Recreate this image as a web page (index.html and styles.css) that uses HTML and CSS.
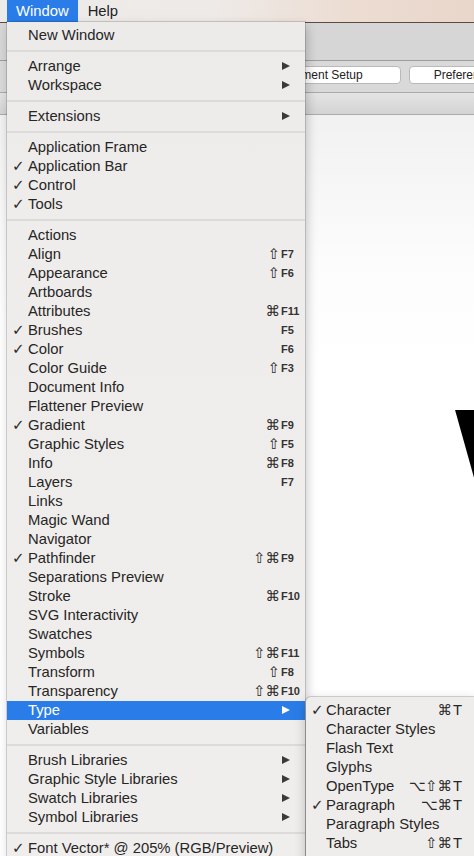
FILE: index.html
```html
<!DOCTYPE html>
<html>
<head>
<meta charset="utf-8">
<title>Window menu</title>
<link rel="stylesheet" href="styles.css">
</head>
<body>
<div class="screen">
  <div class="menubar">
    <span class="mb active">Window</span><span class="mb">Help</span>
  </div>
  <div class="window">
    <div class="toolbar"></div>
    <div class="controlbar">
      <button class="btn doc">Document Setup</button>
      <button class="btn pref">Preferences</button>
    </div>
    <div class="tabbar"></div>
    <div class="canvas"><span class="bigletter">V</span></div>
  </div>

  <div class="menu main">
    <div class="item"><span class="chk"></span><span class="lbl">New Window</span><span class="mod"></span><span class="key"></span></div>
    <div class="sep"></div>
    <div class="item"><span class="chk"></span><span class="lbl">Arrange</span><span class="mod"></span><span class="key"><i class="arrow"></i></span></div>
    <div class="item"><span class="chk"></span><span class="lbl">Workspace</span><span class="mod"></span><span class="key"><i class="arrow"></i></span></div>
    <div class="sep"></div>
    <div class="item"><span class="chk"></span><span class="lbl">Extensions</span><span class="mod"></span><span class="key"><i class="arrow"></i></span></div>
    <div class="sep"></div>
    <div class="item"><span class="chk"></span><span class="lbl">Application Frame</span><span class="mod"></span><span class="key"></span></div>
    <div class="item"><span class="chk">✓</span><span class="lbl">Application Bar</span><span class="mod"></span><span class="key"></span></div>
    <div class="item"><span class="chk">✓</span><span class="lbl">Control</span><span class="mod"></span><span class="key"></span></div>
    <div class="item"><span class="chk">✓</span><span class="lbl">Tools</span><span class="mod"></span><span class="key"></span></div>
    <div class="sep"></div>
    <div class="item"><span class="chk"></span><span class="lbl">Actions</span><span class="mod"></span><span class="key"></span></div>
    <div class="item"><span class="chk"></span><span class="lbl">Align</span><span class="mod">⇧</span><span class="key fk">F7</span></div>
    <div class="item"><span class="chk"></span><span class="lbl">Appearance</span><span class="mod">⇧</span><span class="key fk">F6</span></div>
    <div class="item"><span class="chk"></span><span class="lbl">Artboards</span><span class="mod"></span><span class="key"></span></div>
    <div class="item"><span class="chk"></span><span class="lbl">Attributes</span><span class="mod">⌘</span><span class="key fk">F11</span></div>
    <div class="item"><span class="chk">✓</span><span class="lbl">Brushes</span><span class="mod"></span><span class="key fk">F5</span></div>
    <div class="item"><span class="chk">✓</span><span class="lbl">Color</span><span class="mod"></span><span class="key fk">F6</span></div>
    <div class="item"><span class="chk"></span><span class="lbl">Color Guide</span><span class="mod">⇧</span><span class="key fk">F3</span></div>
    <div class="item"><span class="chk"></span><span class="lbl">Document Info</span><span class="mod"></span><span class="key"></span></div>
    <div class="item"><span class="chk"></span><span class="lbl">Flattener Preview</span><span class="mod"></span><span class="key"></span></div>
    <div class="item"><span class="chk">✓</span><span class="lbl">Gradient</span><span class="mod">⌘</span><span class="key fk">F9</span></div>
    <div class="item"><span class="chk"></span><span class="lbl">Graphic Styles</span><span class="mod">⇧</span><span class="key fk">F5</span></div>
    <div class="item"><span class="chk"></span><span class="lbl">Info</span><span class="mod">⌘</span><span class="key fk">F8</span></div>
    <div class="item"><span class="chk"></span><span class="lbl">Layers</span><span class="mod"></span><span class="key fk">F7</span></div>
    <div class="item"><span class="chk"></span><span class="lbl">Links</span><span class="mod"></span><span class="key"></span></div>
    <div class="item"><span class="chk"></span><span class="lbl">Magic Wand</span><span class="mod"></span><span class="key"></span></div>
    <div class="item"><span class="chk"></span><span class="lbl">Navigator</span><span class="mod"></span><span class="key"></span></div>
    <div class="item"><span class="chk">✓</span><span class="lbl">Pathfinder</span><span class="mod">⇧⌘</span><span class="key fk">F9</span></div>
    <div class="item"><span class="chk"></span><span class="lbl">Separations Preview</span><span class="mod"></span><span class="key"></span></div>
    <div class="item"><span class="chk"></span><span class="lbl">Stroke</span><span class="mod">⌘</span><span class="key fk">F10</span></div>
    <div class="item"><span class="chk"></span><span class="lbl">SVG Interactivity</span><span class="mod"></span><span class="key"></span></div>
    <div class="item"><span class="chk"></span><span class="lbl">Swatches</span><span class="mod"></span><span class="key"></span></div>
    <div class="item"><span class="chk"></span><span class="lbl">Symbols</span><span class="mod">⇧⌘</span><span class="key fk">F11</span></div>
    <div class="item"><span class="chk"></span><span class="lbl">Transform</span><span class="mod">⇧</span><span class="key fk">F8</span></div>
    <div class="item"><span class="chk"></span><span class="lbl">Transparency</span><span class="mod">⇧⌘</span><span class="key fk">F10</span></div>
    <div class="item hl"><span class="chk"></span><span class="lbl">Type</span><span class="mod"></span><span class="key"><i class="arrow"></i></span></div>
    <div class="item"><span class="chk"></span><span class="lbl">Variables</span><span class="mod"></span><span class="key"></span></div>
    <div class="sep"></div>
    <div class="item"><span class="chk"></span><span class="lbl">Brush Libraries</span><span class="mod"></span><span class="key"><i class="arrow"></i></span></div>
    <div class="item"><span class="chk"></span><span class="lbl">Graphic Style Libraries</span><span class="mod"></span><span class="key"><i class="arrow"></i></span></div>
    <div class="item"><span class="chk"></span><span class="lbl">Swatch Libraries</span><span class="mod"></span><span class="key"><i class="arrow"></i></span></div>
    <div class="item"><span class="chk"></span><span class="lbl">Symbol Libraries</span><span class="mod"></span><span class="key"><i class="arrow"></i></span></div>
    <div class="sep"></div>
    <div class="item"><span class="chk">✓</span><span class="lbl">Font Vector* @ 205% (RGB/Preview)</span><span class="mod"></span><span class="key"></span></div>
  </div>

  <div class="menu sub">
    <div class="item"><span class="chk">✓</span><span class="lbl">Character</span><span class="mod">⌘</span><span class="key">T</span></div>
    <div class="item"><span class="chk"></span><span class="lbl">Character Styles</span><span class="mod"></span><span class="key"></span></div>
    <div class="item"><span class="chk"></span><span class="lbl">Flash Text</span><span class="mod"></span><span class="key"></span></div>
    <div class="item"><span class="chk"></span><span class="lbl">Glyphs</span><span class="mod"></span><span class="key"></span></div>
    <div class="item"><span class="chk"></span><span class="lbl">OpenType</span><span class="mod">⌥⇧⌘</span><span class="key">T</span></div>
    <div class="item"><span class="chk">✓</span><span class="lbl">Paragraph</span><span class="mod">⌥⌘</span><span class="key">T</span></div>
    <div class="item"><span class="chk"></span><span class="lbl">Paragraph Styles</span><span class="mod"></span><span class="key"></span></div>
    <div class="item"><span class="chk"></span><span class="lbl">Tabs</span><span class="mod">⇧⌘</span><span class="key">T</span></div>
  </div>
</div>
</body>
</html>
```

FILE: styles.css
```css
* { box-sizing: border-box; }
html, body { margin: 0; padding: 0; }
body {
  width: 474px;
  height: 856px;
  overflow: hidden;
  font-family: "Liberation Sans", Arial, sans-serif;
  color: #262626;
}
.screen {
  position: relative;
  width: 474px;
  height: 856px;
  overflow: hidden;
  display: flex;
  flex-direction: column;
  background: #d8d8d8;
}

/* menu bar */
.menubar {
  height: 22px;
  flex: none;
  display: flex;
  align-items: stretch;
  background: linear-gradient(90deg, #ecebea 0%, #eeeae7 45%, #ecdcd2 75%, #e9d6cb 100%);
  font-size: 14.8px;
  line-height: 22px;
}
.mb { padding: 0 9px; color: #222; }
.mb:first-child { margin-left: 7px; }
.mb + .mb { padding-left: 10px; }
.mb.active { background: #2a7de9; color: #fff; }

/* app window */
.window {
  flex: 1;
  display: flex;
  flex-direction: column;
  border-top: 1px solid #5d4b42;
}
.toolbar {
  height: 38px;
  flex: none;
  background: #d6d6d6;
  border-bottom: 1px solid #9d9d9d;
}
.controlbar {
  height: 32px;
  flex: none;
  background: #d9d9d9;
  border-bottom: 1px solid #a9a9a9;
  display: flex;
  align-items: flex-start;
  gap: 8px;
  padding-top: 5px;
  padding-left: 235px;
}
.btn {
  flex: none;
  height: 18px;
  margin: 0;
  padding: 0;
  background: #fff;
  border: 1px solid #b9b9b9;
  border-radius: 4px;
  font-family: "Liberation Sans", Arial, sans-serif;
  font-size: 12px;
  line-height: 16px;
  color: #222;
  text-align: center;
}
.btn.doc { width: 166px; }
.btn.pref { width: 114px; }
.tabbar {
  height: 22px;
  flex: none;
  background: linear-gradient(#e4e4e4, #d3d3d3);
  border-bottom: 1px solid #ababab;
}
.canvas {
  flex: 1;
  position: relative;
  overflow: hidden;
  background: linear-gradient(#f1f1f1, #fcfcfc 150px, #ffffff 260px);
}
.bigletter {
  position: absolute;
  left: 454px;
  top: 264px;
  font-family: "Liberation Sans", Arial, sans-serif;
  font-weight: bold;
  font-size: 200px;
  line-height: 1;
  color: #000;
  transform: scaleX(0.76);
  transform-origin: left top;
}

/* menus */
.menu {
  position: absolute;
  background: #efedeb;
  font-size: 14.8px;
  color: #262626;
}
.menu.main {
  left: 7px;
  top: 22px;
  width: 298px;
  height: 850px;
  padding-top: 4px;
  box-shadow: 0 0 0 1px rgba(0, 0, 0, 0.14), 2px 4px 10px rgba(0, 0, 0, 0.22);
  background: linear-gradient(#ecebea, #efedeb 200px, #f0eeec);
}
.menu.sub {
  left: 306px;
  top: 697px;
  width: 170px;
  height: 170px;
  padding-top: 4px;
  border-radius: 5px 0 0 0;
  box-shadow: 0 0 0 1px rgba(0, 0, 0, 0.16), 0 4px 12px rgba(0, 0, 0, 0.25);
}
.item {
  display: grid;
  grid-template-columns: 21px 1fr auto 20px;
  height: 19px;
  line-height: 19px;
  padding-right: 4px;
  white-space: nowrap;
}
.menu.sub .item { grid-template-columns: 20px 1fr auto 19px; }
.chk {
  padding-left: 5px;
  font-family: "DejaVu Sans", sans-serif;
  font-size: 15px;
  color: #2a2a2a;
}
.lbl { overflow: visible; }
.mod {
  text-align: right;
  font-family: "DejaVu Sans", sans-serif;
  font-size: 14.5px;
  color: #2a2a2a;
  padding-right: 1px;
}
.key { text-align: left; }
.key.fk {
  font-size: 11px;
  font-weight: bold;
  color: #333;
}
.arrow {
  display: block;
  width: 0;
  height: 0;
  margin-top: 5px;
  margin-left: 1px;
  border-left: 8px solid #3a3a3a;
  border-top: 4.5px solid transparent;
  border-bottom: 4.5px solid transparent;
}
.item.hl { background: #2a7de9; color: #fff; }
.item.hl .arrow { border-left-color: #fff; }
.sep {
  height: 2px;
  margin: 5px 0;
  background: #dddbd9;
}
```
